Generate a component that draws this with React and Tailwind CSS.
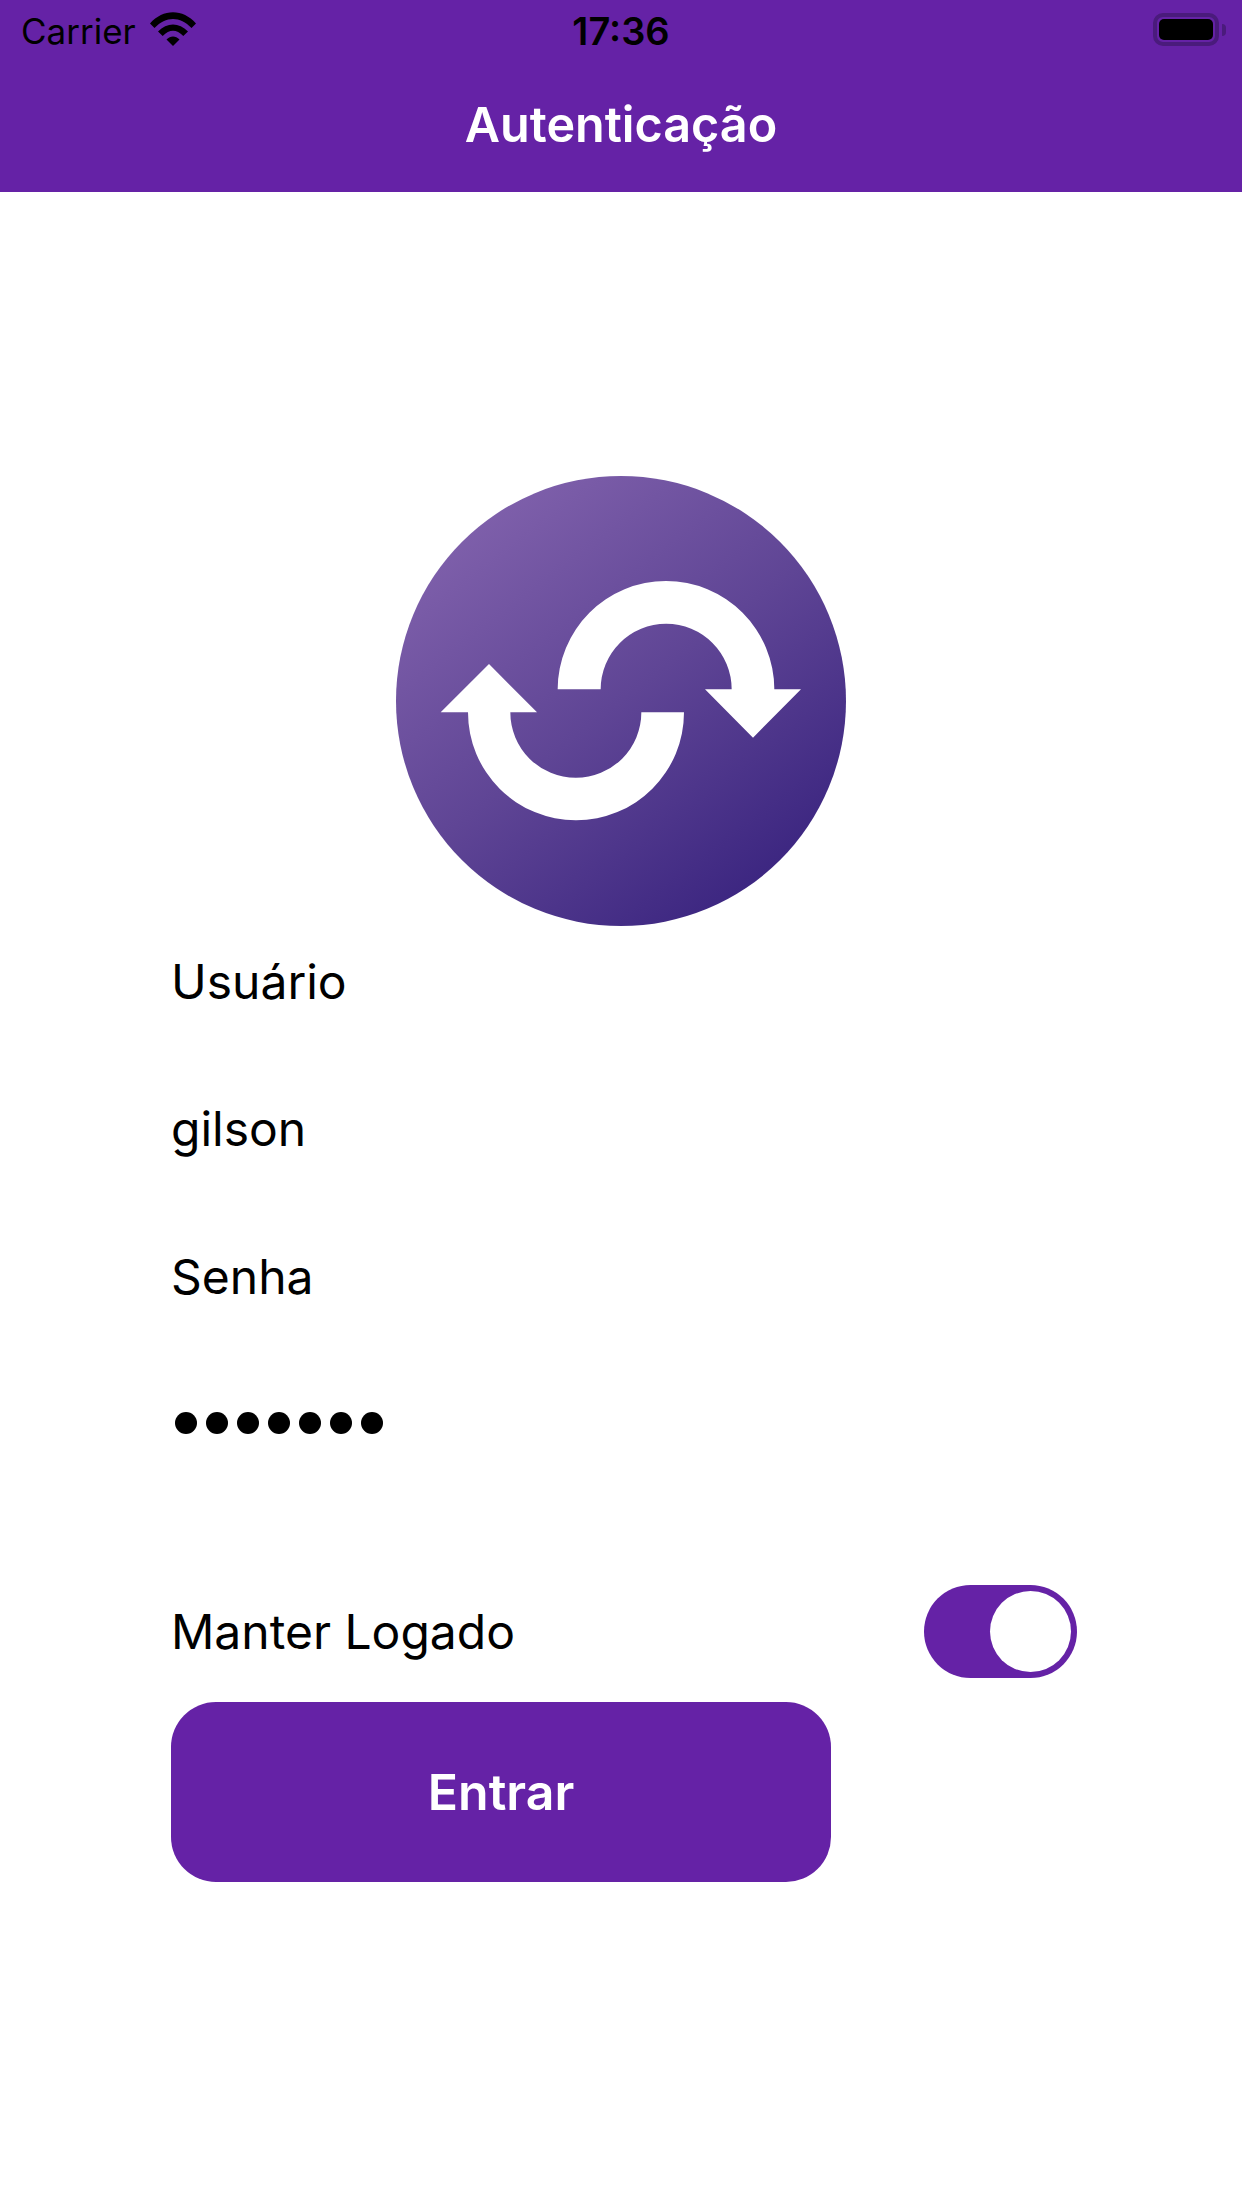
import React from "react";

const font = { fontFamily: '"Inter", "Liberation Sans", sans-serif' };

function Wifi() {
  return (
    <svg width="46" height="34" viewBox="0 0 46 34" className="ml-[14px] mt-[-4px]">
      <path d="M0 11.5 C13 -3.5 33 -3.5 46 11.5 L41.5 16 C30 4 16 4 4.5 16 Z" fill="#000" />
      <path d="M8 19.5 C17 10 29 10 38 19.5 L33.3 24 C26.5 17 19.5 17 12.7 24 Z" fill="#000" />
      <path d="M16.5 27.5 C20.5 23.5 25.5 23.5 29.5 27.5 L23 34 Z" fill="#000" />
    </svg>
  );
}

function Logo() {
  return (
    <svg width="450" height="450" viewBox="0 0 450 450" className="block">
      <defs>
        <linearGradient id="g" x1="0.18" y1="0.08" x2="0.82" y2="0.92">
          <stop offset="0" stopColor="#7f60ab" />
          <stop offset="0.5" stopColor="#5f4595" />
          <stop offset="1" stopColor="#3b2580" />
        </linearGradient>
      </defs>
      <circle cx="225" cy="225" r="225" fill="url(#g)" />
      <path
        fill="#fff"
        d="M161.67 213.33 A108.33 108.33 0 0 1 378.33 213.33 L405 213.33 L357 261.67 L309 213.33 L335.67 213.33 A65.5 65.5 0 0 0 204.67 213.33 Z"
      />
      <path
        fill="#fff"
        d="M288 236.33 A108 108 0 0 1 72 236.33 L44.67 236.33 L93 188 L141 236.33 L114.33 236.33 A65.5 65.5 0 0 0 245.33 236.33 Z"
      />
    </svg>
  );
}

export default function App() {
  return (
    <div className="w-[1242px] h-[2208px] bg-white flex flex-col text-black overflow-hidden" style={font}>
      <header className="h-[192px] bg-[#6522a6] flex flex-col shrink-0">
        <div className="h-[62px] relative flex items-center pl-[21px]">
          <span className="text-[35px] leading-[62px] text-black">Carrier</span>
          <Wifi />
          <span className="absolute left-0 right-0 text-center text-[38px] font-semibold leading-[62px]">17:36</span>
          <div className="absolute left-[1153px] top-[13px] w-[66px] h-[33px] rounded-[10px] border-[4px] border-[#4a1b7c] p-[2px]">
            <div className="w-full h-full bg-black rounded-[5px]"></div>
          </div>
          <div className="absolute left-[1222px] top-[24px] w-[4px] h-[12px] bg-[#4a1b7c] rounded-r-[4px]"></div>
        </div>
        <h1 className="h-[126px] flex items-center justify-center text-[48.5px] font-semibold text-white">Autenticação</h1>
      </header>

      <div className="flex justify-center pt-[284px]">
        <Logo />
      </div>

      <div className="pl-[171px] flex flex-col text-[48px]">
        <div className="h-[112px] flex items-center">Usuário</div>
        <div className="h-[150px] mt-[16px] flex items-center">gilson</div>
        <div className="h-[146px] flex items-center">Senha</div>
        <div className="h-[146px] flex items-center gap-[9px] pl-[4px]">
          {[0, 1, 2, 3, 4, 5, 6].map((i) => (
            <span key={i} className="w-[22px] h-[22px] rounded-full bg-black"></span>
          ))}
        </div>
        <div className="mt-[89px] flex items-center justify-between w-[906px] h-[93px]">
          <span>Manter Logado</span>
          <div className="w-[153px] h-[93px] rounded-full bg-[#6522a6] p-[6px] flex justify-end">
            <span className="w-[81px] h-[81px] rounded-full bg-white"></span>
          </div>
        </div>
        <button className="mt-[24px] w-[660px] h-[180px] rounded-[45px] bg-[#6522a6] text-white font-semibold text-[50px]">
          Entrar
        </button>
      </div>
    </div>
  );
}
